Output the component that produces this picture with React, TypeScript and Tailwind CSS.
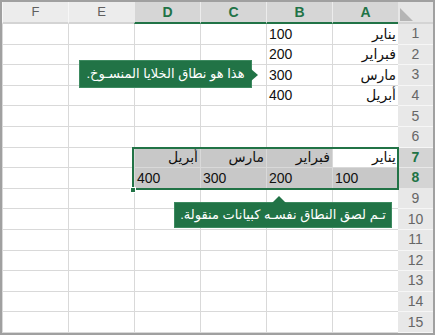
import React from "react";

const GREEN = "#217346";

const cols = ["A", "B", "C", "D", "E", "F"];
const selectedCols = ["A", "B", "C", "D"];

type Cell = { text: string; align: "start" | "end"; fill?: boolean; active?: boolean };

// sparse cell map, keyed by "A1" style refs
const cells: Record<string, Cell> = {
  A1: { text: "يناير", align: "start" },
  A2: { text: "فبراير", align: "start" },
  A3: { text: "مارس", align: "start" },
  A4: { text: "أبريل", align: "start" },
  B1: { text: "100", align: "end" },
  B2: { text: "200", align: "end" },
  B3: { text: "300", align: "end" },
  B4: { text: "400", align: "end" },
  A7: { text: "يناير", align: "start", active: true },
  B7: { text: "فبراير", align: "start", fill: true },
  C7: { text: "مارس", align: "start", fill: true },
  D7: { text: "أبريل", align: "start", fill: true },
  A8: { text: "100", align: "end", fill: true },
  B8: { text: "200", align: "end", fill: true },
  C8: { text: "300", align: "end", fill: true },
  D8: { text: "400", align: "end", fill: true },
};

const rows = Array.from({ length: 15 }, (_, i) => i + 1);

function SelectAllCorner() {
  return (
    <div className="bg-[#e6e6e6] border-b-2 border-[#d4d4d4] relative">
      <svg className="absolute left-[2px] top-[6px]" width="13" height="13" viewBox="0 0 13 13">
        <polygon points="0,0 0,13 13,13" fill="#b5b5b5" />
      </svg>
    </div>
  );
}

function ColHeader({ name }: { name: string }) {
  const sel = selectedCols.includes(name);
  return (
    <div
      className={
        sel
          ? "flex items-center justify-center bg-[#d6d6d6] border-e border-[#ececec] border-b-2 border-b-[#217346] text-[#217346] font-bold text-[14px]"
          : "flex items-center justify-center bg-[#ececec] border-e border-[#f7f7f7] border-b-2 border-b-[#d4d4d4] text-[#5f5f5f] text-[13px]"
      }
    >
      {name}
    </div>
  );
}

function RowHeader({ n }: { n: number }) {
  const sel = n === 7 || n === 8;
  return (
    <div
      className={
        sel
          ? "flex items-center justify-center bg-[#d4d4d4] border-b border-[#e8e8e8] text-[#217346] font-bold text-[14px]"
          : "flex items-center justify-center bg-[#e8e8e8] border-b border-[#f6f6f6] text-[#666666] text-[14px]"
      }
    >
      {n}
    </div>
  );
}

function DataCell({ cell }: { cell?: Cell }) {
  const bg = cell?.fill ? "bg-[#c8c8c8]" : "bg-white";
  return (
    <div
      className={`${bg} border-e border-b border-[#d9d9d9] flex items-end px-[2px] pb-[1px] text-[14px] leading-[17px] text-[#111] overflow-hidden ${
        cell?.align === "end" ? "justify-end" : "justify-start"
      }`}
    >
      {cell?.text}
    </div>
  );
}

function Callout({
  text,
  className,
  arrow,
}: {
  text: string;
  className: string;
  arrow: "right" | "up";
}) {
  return (
    <div
      className={`absolute flex items-center justify-center bg-[#217346] border border-[#3d8a60] text-white text-[13px] ${className}`}
      dir="rtl"
    >
      {text}
      {arrow === "right" ? (
        <svg className="absolute right-[-8px] top-[8px]" width="8" height="12" viewBox="0 0 8 12">
          <polygon points="0,0 7,6 0,12" fill={GREEN} />
        </svg>
      ) : (
        <svg className="absolute left-[97px] top-[-7px]" width="14" height="7" viewBox="0 0 14 7">
          <polygon points="0,7 7,0 14,7" fill={GREEN} />
        </svg>
      )}
    </div>
  );
}

export default function App() {
  return (
    <div
      className="relative w-[435px] h-[335px] bg-white border-2 border-[#a0a0a0] overflow-hidden"
      style={{ fontFamily: '"Liberation Sans", "DejaVu Sans", sans-serif' }}
    >
      <div
        dir="rtl"
        className="grid grid-cols-[35px_repeat(6,66px)] grid-rows-[22px_repeat(15,20.6px)] w-[431px]"
      >
        <SelectAllCorner />
        {cols.map((c) => (
          <ColHeader key={c} name={c} />
        ))}
        {rows.map((r) => (
          <React.Fragment key={r}>
            <RowHeader n={r} />
            {cols.map((c) => (
              <DataCell key={c + r} cell={cells[c + r]} />
            ))}
          </React.Fragment>
        ))}
      </div>

      {/* selected paste range D7:A8 */}
      <div className="absolute left-[130px] top-[145px] w-[267px] h-[43px] border-2 border-[#217346]" />
      <div className="absolute left-[128px] top-[185px] w-[6px] h-[6px] bg-[#217346] border border-white" />

      <Callout
        text="هذا هو نطاق الخلايا المنسـوخ."
        arrow="right"
        className="left-[77px] top-[58px] w-[173px] h-[28px]"
      />
      <Callout
        text="تـم لصق النطاق نفسـه كبيانات منقولة."
        arrow="up"
        className="left-[172px] top-[200px] w-[218px] h-[26px]"
      />
    </div>
  );
}
